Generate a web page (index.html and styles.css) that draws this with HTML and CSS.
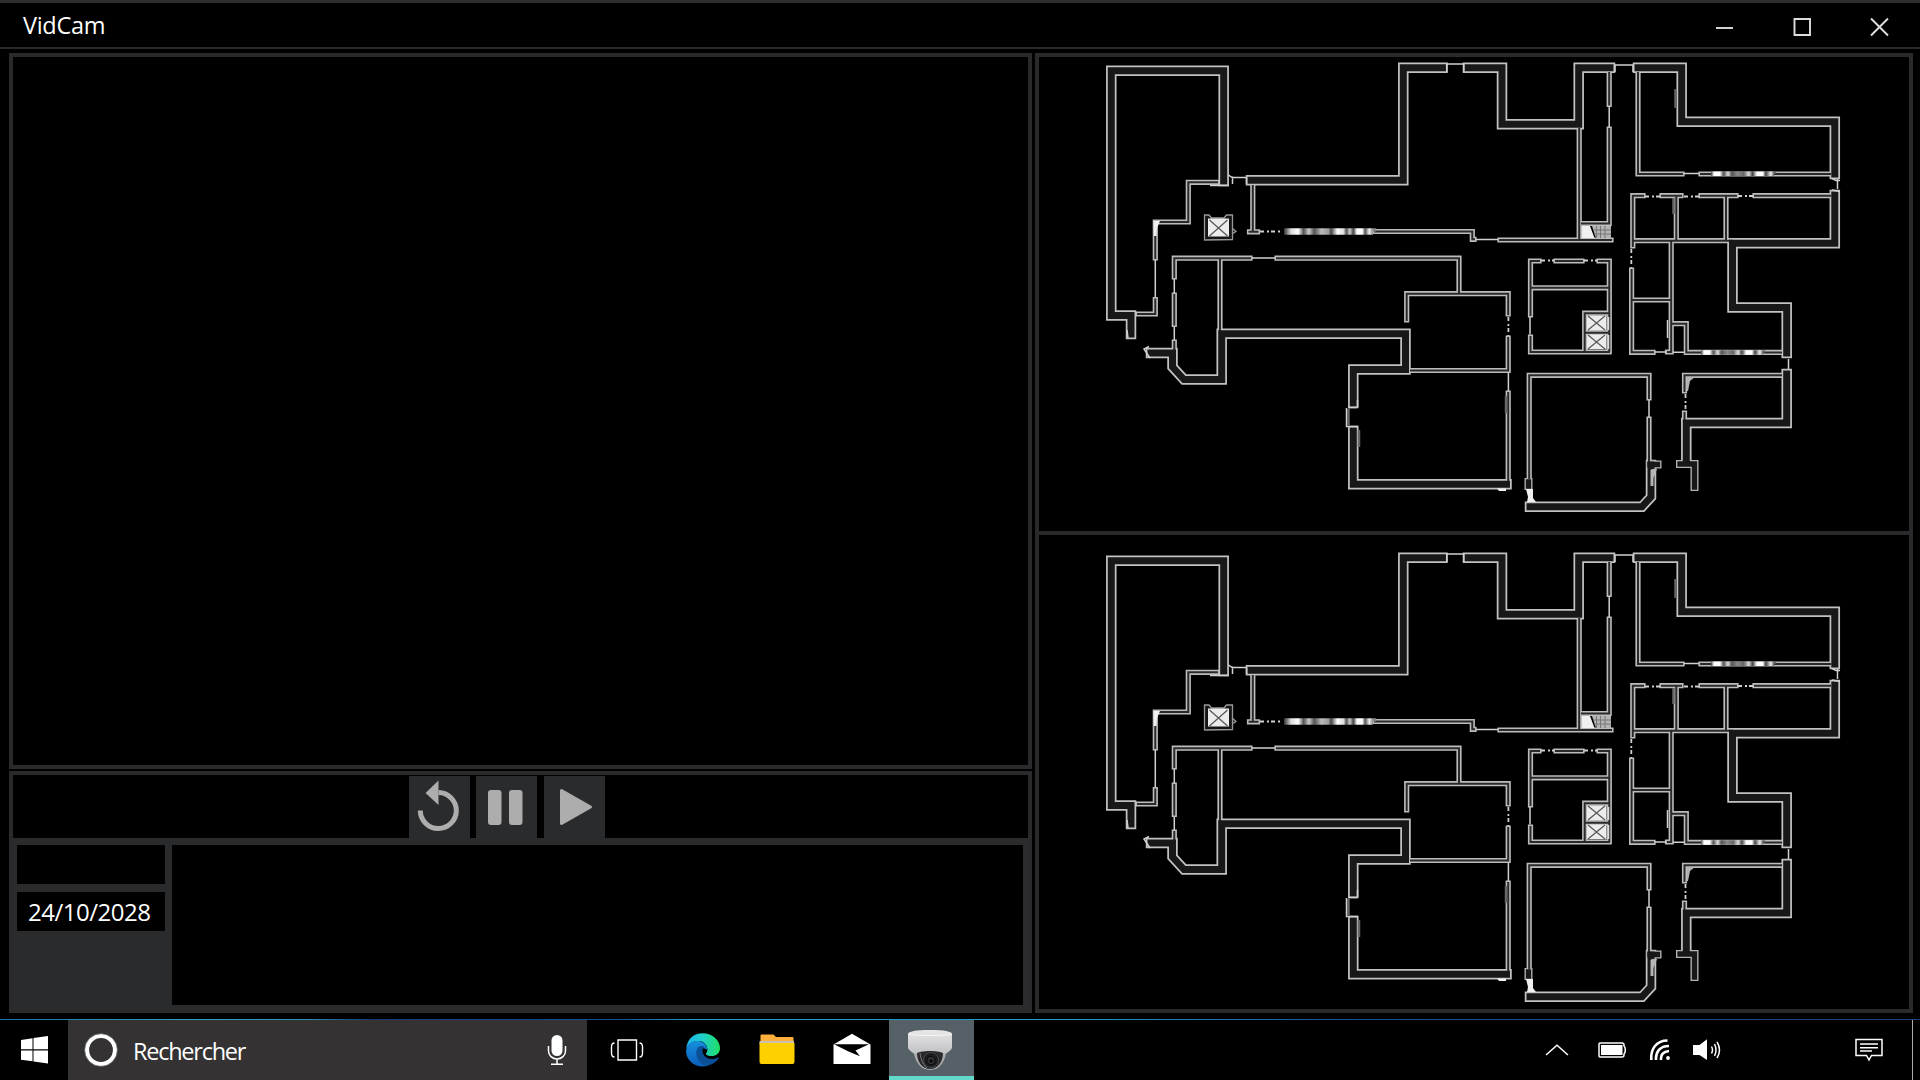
FILE: index.html
```html
<!DOCTYPE html>
<html lang="fr">
<head>
<meta charset="utf-8">
<title>VidCam</title>
<link rel="stylesheet" href="styles.css">
</head>
<body>
<svg class="defs" width="0" height="0" aria-hidden="true">
  <defs>
    <linearGradient id="edge-top" x1="0" y1="0" x2="1" y2="0"><stop offset="0" stop-color="#1bb5ec"/><stop offset=".5" stop-color="#20cfc9"/><stop offset="1" stop-color="#1fe060"/></linearGradient>
    <linearGradient id="edge-low" x1="0" y1="0" x2="0" y2="1"><stop offset="0" stop-color="#1590df"/><stop offset="1" stop-color="#0a5cb8"/></linearGradient>
    <linearGradient id="cam-body" x1="0" y1="0" x2="0" y2="1"><stop offset="0" stop-color="#e9e9ea"/><stop offset="1" stop-color="#bfc0c2"/></linearGradient>
    <linearGradient id="glass-long" gradientUnits="userSpaceOnUse" x1="1284" y1="0" x2="1373" y2="0">
      <stop offset="0" stop-color="#333"/><stop offset=".08" stop-color="#ddd"/><stop offset=".16" stop-color="#fff"/><stop offset=".22" stop-color="#555"/><stop offset=".28" stop-color="#ccc"/><stop offset=".34" stop-color="#555"/><stop offset=".42" stop-color="#bbb"/><stop offset=".5" stop-color="#999"/><stop offset=".53" stop-color="#444"/><stop offset=".6" stop-color="#fff"/><stop offset=".67" stop-color="#ddd"/><stop offset=".7" stop-color="#555"/><stop offset=".74" stop-color="#ccc"/><stop offset=".78" stop-color="#444"/><stop offset=".82" stop-color="#fff"/><stop offset=".88" stop-color="#fff"/><stop offset=".91" stop-color="#555"/><stop offset=".96" stop-color="#eee"/><stop offset="1" stop-color="#888"/>
    </linearGradient>
    <linearGradient id="glass-east" gradientUnits="userSpaceOnUse" x1="1711" y1="0" x2="1774" y2="0">
      <stop offset="0" stop-color="#444"/><stop offset=".05" stop-color="#fff"/><stop offset=".14" stop-color="#fff"/><stop offset=".2" stop-color="#555"/><stop offset=".27" stop-color="#ddd"/><stop offset=".33" stop-color="#555"/><stop offset=".42" stop-color="#888"/><stop offset=".52" stop-color="#666"/><stop offset=".6" stop-color="#ddd"/><stop offset=".66" stop-color="#444"/><stop offset=".73" stop-color="#fff"/><stop offset=".82" stop-color="#fff"/><stop offset=".87" stop-color="#444"/><stop offset=".95" stop-color="#eee"/><stop offset="1" stop-color="#666"/>
    </linearGradient>
    <linearGradient id="glass-south" href="#glass-east" gradientUnits="userSpaceOnUse" x1="1701" y1="0" x2="1763" y2="0"/>
    <path id="thick" d="M1223.7 181V70.8H1111.3V315.5H1131V334M1251 180.2H1403.3V67.8H1442.5M1468 67.8H1502V124.2H1578.7V67.8H1610M1638 67.8H1681.7V121.7H1834.8V174M1834.8 195V243.2H1732.5V307.5H1786.7V353M1786.7 374V422.9H1686.3V462M1151 353H1172.5V367L1184 379.5H1221.7V333.8H1405.5V369.5H1353.3V403M1353.3 431V484.2H1506.500M1530 506.7H1642L1651 497V465"/>
    <path id="thick-ends" d="M1680 464H1694.500V487M1650 464.500H1657.500M1528.500 482V486"/>
    <path id="thin" d="M1217 182.300H1188.300V222H1155.300V258M1155.300 299.500V314H1138M1252.800 186V231.500M1249.500 231.800H1257.500M1375 231.500H1472.300V239.300H1474M1500 240H1611M1579.200 129V238M1609.200 73V104.500M1609.200 129V223.500H1582M1638 73V174H1682M1701 174H1830M1632.800 246V195.700H1643M1662 195.700H1681M1701 195.700H1736M1755 195.700H1830M1632.800 240.700H1732M1676.300 197V240M1726 197V240M1671.200 241V352M1631.600 270V352.300H1653M1633 300H1670M1673 323.700H1686.300V352.400H1781M1671 352H1667.500M1684.500 391V375.300H1781M1684.500 413V420M1529.200 478V375.300H1649V398M1649 419V461M1530.500 315V261H1539M1556 261H1582M1599 261H1609.300V351M1530.500 337V352H1609M1531 287.800H1609M1584.700 352V313.200H1609M1586 332.800H1609M1174.300 277V258.200H1250M1277 258.200H1459V293M1220 260V330M1174.300 295V324.500M1174.300 342V350M1406.700 320V293.700H1508.200V314M1508.200 338V370.500H1411M1508.200 393V480"/>
    <path id="hair" d="M1155.300 260V297M1228.500 175Q1231 177.500 1234 177.500H1246M1232.500 178V184M1246.500 178V184M1476 239.500H1498M1446.700 72V64H1463.700V72M1615 72V65H1633V72M1609.200 106V127M1684 173.500H1699M1837.500 179V189M1832 178.500L1836 180.500H1840M1832 190L1840 191.500M1788.500 359V369M1655 352H1667M1673 352.300H1684M1649 400V417M1530 317V334.500M1508.400 373V391M1252 258H1275M1174.300 279V293M1174.300 327V340M1348 407.500H1357M1357.500 407V400M1346.500 408V426.500H1358M1149 346.500L1144 349L1150 358M1127 330L1128 338M1667.500 338V320M1210 185.500H1229"/>
    <path id="faint" d="M1675.500 89V108M1348.500 409V425M1359 430V447M1506 396V413M1673.500 198V214"/>
    <path id="dash" d="M1260 231.500H1282M1645 196.500H1660M1684 196.500H1699M1738 196H1753M1631.300 249V268M1685.500 394V411M1541 260.500H1554M1584 260.500H1597M1508.400 317V336"/>
    <g id="floor-plan">
      <use href="#thin" class="wall thin-edge"/>
      <use href="#thick" class="wall thick-edge"/>
      <use href="#thick-ends" class="wall end-edge"/>
      <use href="#thin" class="wall thin-core"/>
      <use href="#thick" class="wall thick-core"/>
      <use href="#thick-ends" class="wall end-core"/>
      <use href="#faint" class="faint"/>
      <use href="#hair" class="hair"/>
      <use href="#dash" class="hair dashed"/>
      <path class="glass wide" stroke="url(#glass-long)" d="M1284 231.500H1373V231.600"/>
      <path class="glass" stroke="url(#glass-east)" d="M1711 173.700H1774V173.800"/>
      <path class="glass" stroke="url(#glass-south)" d="M1701 352.400H1763V352.500"/>
      <path class="lift-frame" d="M1204.500 240V215H1209L1211.500 218H1224L1226.500 215H1232.500V239.500ZM1232 228L1236 231.500L1232 234"/>
      <g class="lift">
        <rect x="1208" y="218.500" width="21" height="18"/><path d="M1209.500 220L1227.500 236M1227.500 220L1209.500 236"/>
        <rect x="1587" y="315.500" width="19.500" height="15"/><path d="M1588 316L1605 330M1605 316L1588 330"/>
        <rect x="1587" y="334.700" width="19.500" height="14.500"/><path d="M1588 335L1605 349M1605 335L1588 349"/>
      </g>
      <path class="stair-rail" d="M1608.500 317V330M1608.500 335V349"/>
      <path class="solid" d="M1581.500 226H1590L1594.500 238H1581.500ZM1526 489H1533V498L1536 502H1527L1528 497ZM1153.500 221H1160L1157 228L1156.500 236H1154ZM1497 488.500H1506V491H1499Z"/>
      <path class="soft" d="M1592 226H1611V238H1596ZM1652 469H1657L1653.500 478V486H1650.500V470ZM1687 377H1695L1690 381L1688 391H1687Z"/>
      <path class="steps" d="M1596.500 226V238M1600.500 226V238M1605 226V238M1593 230H1611M1594 234H1611"/>
    </g>
  </defs>
</svg>

<header class="titlebar">
  <h1 class="title">VidCam</h1>
  <div class="window-buttons">
    <svg width="19" height="20" viewBox="0 0 19 20"><path d="M1 11H18"/></svg>
    <svg width="19" height="20" viewBox="0 0 19 20"><path d="M1.500 2H17V18H1.500Z"/></svg>
    <svg width="19" height="20" viewBox="0 0 19 20"><path d="M1 1.500L18 18.500M18 1.500L1 18.500"/></svg>
  </div>
</header>

<main class="workspace">
  <section class="left">
    <div class="viewer"></div>
    <div class="deck">
      <div class="controls">
        <button class="control" aria-label="Relire"><svg width="61" height="62" viewBox="0 0 61 62"><path class="ring" d="M11.300 34.500A18 18 0 1 0 29.500 16.500"/><path d="M16.500 17L29.500 4.500V29Z"/></svg></button>
        <button class="control" aria-label="Pause"><svg width="61" height="62" viewBox="0 0 61 62"><rect x="12" y="14" width="13.500" height="35" rx="3"/><rect x="33" y="14" width="13.500" height="35" rx="3"/></svg></button>
        <button class="control play" aria-label="Lecture"><svg width="61" height="62" viewBox="0 0 61 62"><path class="rounded" d="M17.500 14.500L46.500 31L17.500 47.500Z"/></svg></button>
      </div>
      <div class="details">
        <div class="stamps">
          <div class="stamp"></div>
          <div class="stamp">24/10/2028</div>
        </div>
        <div class="log"></div>
      </div>
    </div>
  </section>
  <section class="maps">
    <svg class="map" viewBox="1039 57 870 474"><use href="#floor-plan"/></svg>
    <svg class="map" viewBox="1039 45 870 474"><use href="#floor-plan"/></svg>
  </section>
</main>

<footer class="taskbar">
  <div class="start"><svg width="27" height="28" viewBox="0 0 27 28"><path fill="#fff" d="M0 4L11.500 2.300V13.300H0ZM12.500 2.100L27 0V13.300H12.500ZM0 14.500H11.500V25.300L0 23.700ZM12.500 14.500H27V27.500L12.500 25.500Z"/></svg></div>
  <div class="search">
    <svg width="34" height="36" viewBox="0 0 34 36"><circle cx="17" cy="18" r="14" fill="none" stroke="#fff" stroke-width="4.200"/><circle cx="17" cy="18" r="16.400" fill="none" stroke="#777" stroke-width=".8"/></svg>
    <span class="search-label">Rechercher</span>
    <svg class="mic" width="20" height="32" viewBox="0 0 20 32"><rect x="4.500" y="1" width="11" height="21" rx="5.500" fill="#fff"/><path d="M1.500 12V17A8.500 8 0 0 0 18.500 17V12M10 25V30M4 30.300H16" fill="none" stroke="#fff" stroke-width="1.500"/></svg>
  </div>
  <div class="apps">
    <svg class="app" width="34" height="24" viewBox="0 0 34 24"><path d="M8 2H26.500V22H8ZM4.500 5Q1.500 5 1.500 9V15Q1.500 19 4.500 19M29.500 5Q32.500 5 32.500 9V15Q32.500 19 29.500 19" fill="none" stroke="#fff" stroke-width="1.400"/></svg>
    <svg class="app" width="36" height="36" viewBox="0 0 36 36">
      <path d="M1.200 17C2 7 9 1.300 17.500 1.300C28 1.300 35 9 35 16C35 21.500 31 24 26.500 24C22.500 24 20.500 22.500 21 21.500C23.500 19 23 14 18.500 10.500C12 7 4 10 1.200 17Z" fill="url(#edge-top)"/>
      <path d="M1.200 18C2.500 10.500 10 8 15.500 9.500C20 11 22.500 15 22.500 18.500C20 15 14.500 15.500 13.500 21C12.500 28 19 34 24 33.200C12 38 0 29 1.200 18Z" fill="url(#edge-low)"/>
      <path d="M12 17C9 26 16 34 23 33.500C28 32.500 32 29 33.700 26.300C34 25.500 33.500 25.300 33 25.600C24 30 17 24 17.500 18C18 15.500 20 15 21 15.500C18 13 13 13.500 12 17Z" fill="#0b4f96"/>
    </svg>
    <svg class="app" width="36" height="32" viewBox="0 0 36 32"><path d="M1.500 9V2.500Q1.500 1.500 2.500 1.500H14.500L17 4H33.500Q34.500 4 34.500 5V9Z" fill="#ffb03c"/><path d="M.5 8H35V11H.5Z" fill="#c9c2b2"/><path d="M.5 10H35.500V28.500Q35.500 31 33.500 31H2.500Q.5 31 .5 28.500Z" fill="#ffd000"/></svg>
    <svg class="app" width="38" height="32" viewBox="0 0 38 32"><path d="M.5 11.500L19 .8L37.500 11.500V31H.5Z" fill="#fff"/><path d="M1 11.300H36L22.500 17.500L27 23.200L15.500 18.500Z" fill="#000"/></svg>
    <div class="app active"><svg width="46" height="42" viewBox="0 0 46 42">
      <path d="M6 18H40C39 32 33 41 23 41S7 32 6 18Z" fill="#a9abad"/><path d="M10 23C12 19.500 34 19.500 36 23C36 33 31 40 23 40S10 33 10 23Z" fill="#29292b"/>
      <path d="M13 24C14 32 17 37 20 39" fill="none" stroke="#77797c"/>
      <circle cx="24" cy="31" r="7.500" fill="#1c1c1f" stroke="#46484b"/><circle cx="24" cy="31.500" r="4.200" fill="#303236" stroke="#080808"/><circle cx="24" cy="32" r="1.800" fill="#080809"/>
      <path d="M1 5C1 2.500 9 1 23 1S45 2.500 45 5V19C44 21.500 39 25 37 25C35 21 11 21 9 25C7 25 2 21.500 1 19Z" fill="url(#cam-body)"/><path d="M1.500 5C8 7 38 7 44.500 5" fill="none" stroke="#f6f6f6"/>
    </svg></div>
  </div>
  <div class="tray">
    <svg class="tray-icon up" width="24" height="12" viewBox="0 0 24 12"><path d="M1 11L12 1.200L23 11"/></svg>
    <svg class="tray-icon battery" width="28" height="16" viewBox="0 0 28 16"><path d="M2 1H24Q26 1 26 3V4Q27.300 5 27.300 8T26 12V13Q26 15 24 15H2Q1 15 1 14V2Q1 1 2 1Z"/><rect class="fill" x="3" y="3" width="21.500" height="10"/></svg>
    <svg class="tray-icon wifi" width="21" height="22" viewBox="0 0 21 22"><path class="bold" d="M1.300 21C.5 9 7 1.500 17.500 1.500M6 21C5.500 12.500 10 7 19 7M11 21C10.500 15.500 13.500 12.500 19 12"/><circle class="fill" cx="18" cy="19" r="1.900"/></svg>
    <svg class="tray-icon volume" width="28" height="22" viewBox="0 0 28 22"><path class="fill" d="M0 6H6.500L14 .3V21L6.500 16H0Z"/><path d="M18.500 7.500Q20.500 11 18.500 14.500M21.500 5Q24.500 11 21.500 17M24 3Q29 11 24 19"/></svg>
    <svg class="tray-icon notice" width="28" height="24" viewBox="0 0 28 24"><path d="M1 1.500H27V17.500H16.500L14 22L11.500 17.500H1ZM5 6H23M5 9.700H23M5 13H17"/></svg>
    <span class="show-desktop"></span>
  </div>
</footer>
</body>
</html>
```
FILE: styles.css
```css
* { box-sizing: border-box; }

body {
  margin: 0;
  width: 1920px;
  height: 1080px;
  display: flex;
  flex-direction: column;
  overflow: hidden;
  background: #000;
  color: #fff;
  font-family: "Open Sans", "Noto Sans", sans-serif;
  font-size: 24px;
}

svg { display: block; flex: none; }
.defs { position: absolute; }

/* Title bar */
.titlebar {
  height: 49px;
  flex: none;
  display: flex;
  align-items: center;
  justify-content: space-between;
  padding: 0 31px 0 23px;
  border-top: 3px solid #2d2d2f;
  border-bottom: 2px solid #2a2a2c;
}
.title {
  margin: 0;
  padding-bottom: 1px;
  font-size: 23.500px;
  font-weight: 400;
  line-height: 30px;
  letter-spacing: -.3px;
}
.window-buttons { display: flex; gap: 58.500px; padding-top: 4px; }
.window-buttons path { fill: none; stroke: #ddd; stroke-width: 1.900; }

/* Work area */
.workspace {
  height: 970px;
  flex: none;
  display: flex;
  gap: 3px;
  padding: 4px 7px 6px 9px;
}
.left { width: 1023px; display: flex; flex-direction: column; gap: 2px; }
.viewer { height: 716px; border: 4px solid #2a2a2c; }
.deck {
  flex: 1;
  display: flex;
  flex-direction: column;
  border: 4px solid #2a2a2c;
  border-bottom: 0;
}
.controls {
  height: 63px;
  display: flex;
  gap: 6px;
  padding: 1px 0 0 396px;
}
.control { width: 61px; height: 62px; padding: 0; border: 0; background: #2a2b2d; }
.control.play { margin-left: 1px; }
.control svg { fill: #adadad; }
.control .ring { fill: none; stroke: #adadad; stroke-width: 5; }
.control .rounded { stroke: #adadad; stroke-width: 3; stroke-linejoin: round; }
.details {
  flex: 1;
  display: flex;
  gap: 7px;
  padding: 7px 5px 8px 4px;
  background: #2a2b2d;
}
.stamps { width: 148px; display: flex; flex-direction: column; gap: 8px; }
.stamp {
  height: 39px;
  padding-left: 11px;
  background: #000;
  line-height: 39px;
  letter-spacing: -.5px;
  white-space: nowrap;
}
.log { flex: 1; background: #000; }
.maps {
  width: 878px;
  display: flex;
  flex-direction: column;
  gap: 4px;
  border: 4px solid #2a2a2c;
  background: #2a2a2c;
}
.map { width: 870px; height: 474px; background: #000; }

/* Floor plan */
.wall { fill: none; stroke-linecap: square; stroke-linejoin: miter; }
.thick-edge { stroke: #c2c2c2; stroke-width: 10.500; }
.thick-core { stroke: #181818; stroke-width: 7; }
.end-edge { stroke: #b4b4b4; stroke-width: 8; }
.end-core { stroke: #181818; stroke-width: 5.300; }
.thin-edge { stroke: #bcbcbc; stroke-width: 5.200; }
.thin-core { stroke: #2a2a2a; stroke-width: 2; }
.hair { fill: none; stroke: #d0d0d0; stroke-width: 1.500; }
.dashed { stroke-width: 1.800; stroke-dasharray: 4 3 2 2; }
.faint { fill: none; stroke: #666; stroke-width: 2.500; }
.glass { fill: none; stroke-width: 4.500; }
.glass.wide { stroke-width: 6.500; }
.lift-frame { fill: #151515; stroke: #999; stroke-width: 1.300; }
.lift rect { fill: #ececec; }
.lift path { fill: none; stroke: #555; stroke-width: 1.200; }
.stair-rail { stroke: #ddd; stroke-width: 1.500; }
.solid { fill: #f0f0f0; }
.soft { fill: #b4b4b4; }
.steps { fill: none; stroke: #777; stroke-width: 1; }

/* Taskbar */
.taskbar {
  height: 61px;
  flex: none;
  display: flex;
  border-top: 1px solid;
  border-image: linear-gradient(90deg, #1674a8, #2aa5c0 200px, #2a8fae 310px, #123a78 370px, #16509a 620px, #1b9cc4 690px, #1b9cc4 1080px, #1b4f9a 1350px, #1b427e) 1;
}
.start { width: 68px; display: flex; align-items: center; padding: 0 0 1px 21px; }
.search {
  width: 519px;
  display: flex;
  align-items: center;
  padding: 0 20px 0 16px;
  background: #343233;
}
.search-label { padding: 2px 0 0 15px; font-size: 23.500px; letter-spacing: -1.250px; }
.mic { margin: 0 0 0 auto; }
.apps { display: flex; align-items: center; padding-left: 23px; }
.app { margin-right: 41px; }
.app:nth-child(2), .app:nth-child(3) { margin-right: 38px; }
.app:nth-child(4) { margin-right: 18px; }
.app:nth-child(3), .app:nth-child(4) { margin-bottom: 3px; }
.app.active {
  align-self: stretch;
  width: 85px;
  margin: 0;
  padding: 9px 0 0 18px;
  background: #566067;
  border-bottom: 4px solid #63d9cc;
}
.tray { flex: 1; display: flex; align-items: center; padding-left: 571px; }
.tray-icon { fill: none; stroke: #fff; stroke-width: 1.500; }
.tray-icon .fill { fill: #fff; stroke: none; }
.tray-icon .bold { stroke-width: 2.600; }
.battery { margin-left: 29px; }
.wifi { margin-left: 24px; }
.volume { margin-left: 22px; }
.notice { margin-left: 134px; }
.show-desktop { align-self: stretch; width: 1px; margin-left: 29px; background: #aaa; }
```
